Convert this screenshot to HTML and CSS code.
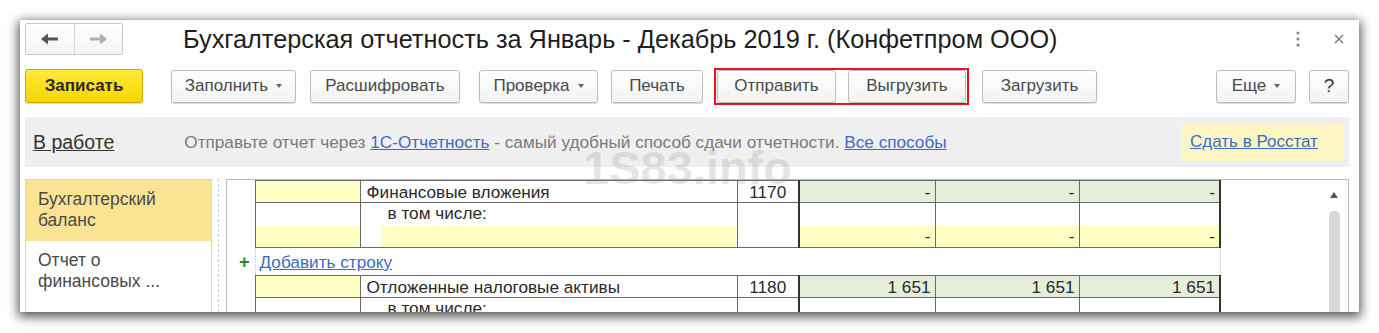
FILE: index.html
```html
<!DOCTYPE html>
<html lang="ru">
<head>
    <meta charset="UTF-8">
    <title>Бухгалтерская отчетность</title>
    <link rel="stylesheet" href="styles.css">
</head>
<body>

    <div class="window">
        <div class="header">
            <div class="nav">
                <span class="nav-btn">
                    <svg width="18" height="12" viewBox="0 0 18 12"><path d="M0 6 L7 0.5 L7 4.5 L17 4.5 L17 7.5 L7 7.5 L7 11.5 Z" fill="#555"/></svg>
                </span>
                <span class="nav-btn">
                    <svg width="18" height="12" viewBox="0 0 18 12"><path d="M18 6 L11 0.5 L11 4.5 L1 4.5 L1 7.5 L11 7.5 L11 11.5 Z" fill="#b0b0b0"/></svg>
                </span>
            </div>
            <h1 class="title">Бухгалтерская отчетность за Январь - Декабрь 2019 г. (Конфетпром ООО)</h1>
            <span class="kebab">
                <svg width="4" height="16" viewBox="0 0 4 16"><circle cx="2" cy="2" r="1.6" fill="#888"/><circle cx="2" cy="8" r="1.6" fill="#888"/><circle cx="2" cy="14" r="1.6" fill="#888"/></svg>
            </span>
            <span class="close">
                <svg width="10" height="10" viewBox="0 0 10 10"><path d="M1 1 L9 9 M9 1 L1 9" stroke="#777" stroke-width="1.4"/></svg>
            </span>
        </div>

        <div class="toolbar">
            <button class="btn btn-main">Записать</button>
            <button class="btn btn-fill">Заполнить <span class="caret"></span></button>
            <button class="btn btn-decode">Расшифровать</button>
            <button class="btn btn-check">Проверка <span class="caret"></span></button>
            <button class="btn btn-print">Печать</button>
            <div class="highlight">
                <button class="btn btn-send">Отправить</button>
                <button class="btn btn-unload">Выгрузить</button>
            </div>
            <button class="btn btn-load">Загрузить</button>
            <button class="btn btn-more">Еще <span class="caret"></span></button>
            <button class="btn btn-help">?</button>
        </div>

        <div class="infobar">
            <a class="status" href="#">В работе</a>
            <span class="info-text">Отправьте отчет через <a href="#">1С-Отчетность</a> - самый удобный способ сдачи отчетности. <a href="#">Все способы</a></span>
            <div class="rosstat"><a href="#">Сдать в Росстат</a></div>
        </div>

        <div class="main">
            <div class="sidebar">
                <div class="side-item active">Бухгалтерский баланс</div>
                <div class="side-item">Отчет о<br>финансовых ...</div>
            </div>
            <div class="splitter"></div>
            <div class="sheet">
                <div class="sheet-body">
                    <table class="report">
                        <colgroup>
                            <col class="col-m">
                            <col class="col-0">
                            <col class="col-1">
                            <col class="col-2">
                            <col class="col-3">
                            <col class="col-4">
                            <col class="col-5">
                        </colgroup>
                        <tr class="row">
                            <td class="m"></td>
                            <td class="yellow"></td>
                            <td class="name">Финансовые вложения</td>
                            <td class="code">1170</td>
                            <td class="val green first">-</td>
                            <td class="val green">-</td>
                            <td class="val green last">-</td>
                        </tr>
                        <tr class="row sub">
                            <td class="m"></td>
                            <td></td>
                            <td class="name indent">в том числе:</td>
                            <td class="code"></td>
                            <td class="val first"></td>
                            <td class="val"></td>
                            <td class="val last"></td>
                        </tr>
                        <tr class="row sub-fill">
                            <td class="m"></td>
                            <td class="yellow"></td>
                            <td class="name fill"></td>
                            <td class="code"></td>
                            <td class="val yellow first">-</td>
                            <td class="val yellow">-</td>
                            <td class="val yellow last">-</td>
                        </tr>
                        <tr class="add-row">
                            <td class="m plus">+</td>
                            <td class="add" colspan="6"><a href="#">Добавить строку</a></td>
                        </tr>
                        <tr class="row">
                            <td class="m"></td>
                            <td class="yellow"></td>
                            <td class="name">Отложенные налоговые активы</td>
                            <td class="code">1180</td>
                            <td class="val green first">1 651</td>
                            <td class="val green">1 651</td>
                            <td class="val green last">1 651</td>
                        </tr>
                        <tr class="row sub">
                            <td class="m"></td>
                            <td></td>
                            <td class="name indent">в том числе:</td>
                            <td class="code"></td>
                            <td class="val first"></td>
                            <td class="val"></td>
                            <td class="val last"></td>
                        </tr>
                    </table>
                </div>
                <div class="scrollbar">
                    <span class="arrow-up"></span>
                    <span class="thumb"></span>
                </div>
            </div>
        </div>

        <div class="watermark">1S83.info</div>
    </div>

</body>
</html>
```

FILE: styles.css
```css
body {
    margin: 0;
    background-color: #fff;
    font-family: "Liberation Sans", Arial, sans-serif;
}

.window {
    position: relative;
    box-sizing: border-box;
    width: 1339px;
    height: 292px;
    margin: 20px;
    padding: 0 10px 0 5px;
    background-color: #fff;
    box-shadow: 0 3px 10px 2px rgba(0, 0, 0, 0.65);
    overflow: hidden;
    display: flex;
    flex-direction: column;
}

/* Шапка */
.header {
    display: flex;
    align-items: center;
    height: 32px;
    padding-top: 3px;
}

.nav {
    display: flex;
    width: 98px;
    height: 32px;
    box-sizing: border-box;
    border: 1px solid #c9c9c9;
    border-radius: 2px;
    background: linear-gradient(#fff, #f3f3f3);
}

.nav-btn {
    flex: 1;
    display: flex;
    align-items: center;
    justify-content: center;
}

.nav-btn + .nav-btn {
    border-left: 1px solid #d6d6d6;
}

.title {
    margin: 0 0 0 60px;
    font-size: 25.3px;
    font-weight: normal;
    color: #1e1e1e;
    white-space: nowrap;
}

.kebab {
    margin-left: auto;
    display: flex;
    margin-right: 34px;
}

.close {
    display: flex;
    margin-right: 5px;
}

/* Панель кнопок */
.toolbar {
    display: flex;
    align-items: center;
    gap: 13px;
    margin-top: 14px;
    height: 34px;
}

.btn {
    box-sizing: border-box;
    height: 33px;
    padding: 0;
    border: 1px solid #bdbdbd;
    border-radius: 3px;
    background: linear-gradient(#fff, #f2f2f2);
    box-shadow: 0 1px 1px rgba(0, 0, 0, 0.15);
    font-family: inherit;
    font-size: 17px;
    color: #4a4a4a;
    display: flex;
    align-items: center;
    justify-content: center;
}

.caret {
    display: inline-block;
    width: 0;
    height: 0;
    margin-left: 8px;
    border-left: 3.5px solid transparent;
    border-right: 3.5px solid transparent;
    border-top: 4px solid #666;
}

.btn-main {
    width: 118px;
    height: 34px;
    border-color: #c9a800;
    background: linear-gradient(#ffea3a, #f7d600);
    font-weight: bold;
    color: #2a2a2a;
}

.btn-fill { width: 125px; margin-left: 15px; }
.btn-decode { width: 150px; margin-left: 1px; }
.btn-check { width: 119px; margin-left: 6px; }
.btn-print { width: 92px; }
.btn-send { width: 119px; }
.btn-unload { width: 118px; }
.btn-load { width: 115px; }
.btn-more { width: 80px; margin-left: auto; }
.btn-help { width: 40px; font-size: 19px; color: #333; }

.highlight {
    display: flex;
    gap: 12px;
    padding: 0 1px;
    margin-left: -2px;
    border: 2px solid #e8141b;
    height: 37px;
    box-sizing: border-box;
    align-items: center;
}

/* Информационная строка */
.infobar {
    display: flex;
    align-items: center;
    height: 50px;
    margin-top: 14px;
    padding-left: 8px;
    background-color: #efefef;
}

a {
    color: #3b6cc2;
}

.status {
    font-size: 19.5px;
    color: #333;
}

.info-text {
    margin-left: 70px;
    font-size: 17.2px;
    color: #7a7a7a;
}

.rosstat {
    display: flex;
    align-items: center;
    box-sizing: border-box;
    width: 161px;
    height: 38px;
    margin-left: auto;
    margin-right: 6px;
    padding-left: 8px;
    background-color: #fdf6c3;
    font-size: 17px;
}

/* Основная часть */
.main {
    flex: 1;
    display: flex;
    margin-top: 12px;
    min-height: 0;
}

.sidebar {
    width: 187px;
    box-sizing: border-box;
    border: 1px solid #d4d4d4;
    border-bottom: none;
}

.side-item {
    padding: 9px 12px 10px;
    font-size: 17.5px;
    line-height: 21px;
    color: #4a4a4a;
}

.side-item.active {
    background-color: #fbe394;
}

.splitter {
    width: 14px;
    box-sizing: border-box;
    padding-left: 6px;
}

.splitter::before {
    content: "";
    display: block;
    height: 100%;
    border-left: 1px dashed #cfcfcf;
}

.sheet {
    flex: 1;
    display: flex;
    border: 1px solid #bcbcbc;
    border-bottom: none;
}

.sheet-body {
    flex: 1;
}

.report {
    border-collapse: collapse;
    table-layout: fixed;
    width: 993px;
    font-size: 17.2px;
    color: #2a2a2a;
}

.col-m { width: 28px; }
.col-0 { width: 105px; }
.col-1 { width: 377px; }
.col-2 { width: 62px; }
.col-3 { width: 136px; }
.col-4 { width: 144px; }
.col-5 { width: 141px; }

.report td {
    padding: 0;
    line-height: 20px;
    white-space: nowrap;
    overflow: hidden;
    border: 1px solid #6a6a6a;
}

.report td.m {
    border: none;
}

.row { height: 22px; }
.row.sub { height: 23px; }

.row.sub td {
    border-bottom-style: hidden;
    vertical-align: top;
}

.row.sub td.m { border: none; }

.yellow { background-color: #ffffc4; }
.green { background-color: #e5eedb; }

.name { padding-left: 6px !important; }
.name.indent { padding-left: 27px !important; }
.name.fill { background: linear-gradient(to right, #fff 21px, #ffffc4 21px); }

.code { text-align: center; }

.val {
    text-align: right;
    padding-right: 4px !important;
}

.report td.first { border-left: 2px solid #333; }
.report td.last { border-right: 2px solid #333; }

.add-row { height: 28px; }

.report td.plus {
    text-align: right;
    padding-right: 5px;
    color: #1f8a1f;
    font-weight: bold;
    font-size: 18px;
}

.report td.add {
    border-left: 1px dotted #bdbdbd;
    border-right: 1px dotted #bdbdbd;
    padding-left: 4px;
}

/* Прокрутка */
.scrollbar {
    width: 20px;
    display: flex;
    flex-direction: column;
    align-items: center;
    padding-right: 4px;
}

.arrow-up {
    width: 0;
    height: 0;
    margin-top: 12px;
    border-left: 4px solid transparent;
    border-right: 4px solid transparent;
    border-bottom: 6px solid #555;
}

.thumb {
    width: 11px;
    flex: 1;
    margin-top: 13px;
    border-radius: 5px 5px 0 0;
    background-color: #d7d7d7;
}

.watermark {
    position: absolute;
    left: 563px;
    top: 124px;
    font-size: 47px;
    line-height: 1;
    font-weight: bold;
    color: rgba(140, 140, 140, 0.22);
    pointer-events: none;
}
```
